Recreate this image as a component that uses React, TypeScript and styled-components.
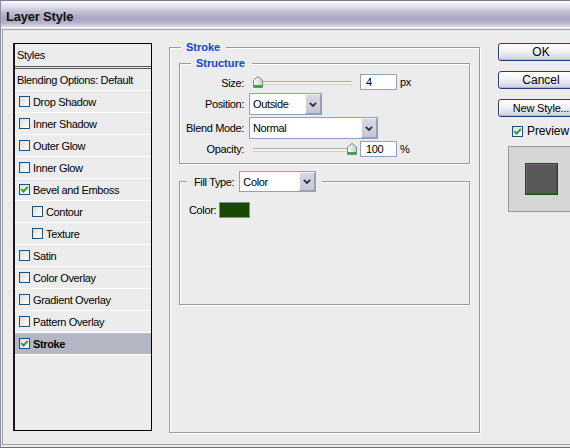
import React from 'react';
import styled, { createGlobalStyle } from 'styled-components';

const GlobalStyle = createGlobalStyle`
  html, body {
    margin: 0;
    padding: 0;
    overflow: hidden;
    background: #ececec;
  }
  body {
    font-family: 'Liberation Sans', Arial, sans-serif;
    font-size: 11px;
    letter-spacing: -0.35px;
    color: #000;
  }
`;

const Window = styled.div`
  width: 600px;
  height: 448px;
  box-sizing: border-box;
  display: flex;
  flex-direction: column;
  background: #ececec;
  border-left: 1px solid #8c8ca2;
  border-bottom: 1px solid #6e6e8a;
`;

const TitleBar = styled.div`
  flex: none;
  height: 28px;
  box-sizing: border-box;
  padding: 8px 0 0 5px;
  border-top: 1px solid #7a7a96;
  border-bottom: 1px solid #f6f6fa;
  background: linear-gradient(
    to bottom,
    #fdfdff 0%,
    #e4e4ee 18%,
    #bdbcd0 45%,
    #a7a6c0 66%,
    #b4b3ca 84%,
    #dcdce8 100%
  );
  font-size: 13px;
  font-weight: bold;
  letter-spacing: -0.2px;
  line-height: 15px;
  color: #111;
`;

const Frame = styled.div`
  margin: 1px 0 2px 1px;
  height: 416px;
  box-sizing: border-box;
  border: 1px solid #a0a0a8;
  display: flex;
  align-items: flex-start;
  padding: 13px 0 0 10px;
`;

/* ---------- left style list ---------- */

const StyleList = styled.div`
  flex: none;
  width: 139px;
  height: 388px;
  box-sizing: border-box;
  border: 1px solid #000;
  border-left: 2px solid #1a1a1a;
  background: #ececec;
`;

const ListHeader = styled.div`
  height: 22px;
  line-height: 22px;
  padding-left: 2px;
  border-bottom: 3px double #555;
`;

const ListItem = styled.div<{ $indent?: boolean; $selected?: boolean; $plain?: boolean }>`
  height: 21px;
  border-bottom: 1px solid #fff;
  display: flex;
  align-items: center;
  gap: 3px;
  padding-left: ${(p) => (p.$plain ? 2 : p.$indent ? 17 : 4)}px;
  background: ${(p) => (p.$selected ? '#b4b6c4' : 'transparent')};
  font-weight: ${(p) => (p.$selected ? 'bold' : 'normal')};
  white-space: nowrap;
`;

const Box = styled.span`
  flex: none;
  width: 11px;
  height: 11px;
  box-sizing: border-box;
  border: 1px solid #1c5180;
  background: linear-gradient(135deg, #dcdcd6 0%, #f2f2ef 60%, #ffffff 100%);
  display: inline-flex;
  align-items: center;
  justify-content: center;
`;

const Checkbox = ({ checked }: { checked?: boolean }) => (
  <Box>
    {checked && (
      <svg width="9" height="9" viewBox="0 0 9 9">
        <path d="M1.3 4.2 L3.5 6.6 L7.8 1.8" fill="none" stroke="#21a121" strokeWidth="1.9" />
      </svg>
    )}
  </Box>
);

/* ---------- group boxes ---------- */

const Group = styled.fieldset<{ $height?: number }>`
  margin: 0;
  padding: 0;
  min-inline-size: 0;
  box-sizing: border-box;
  border: 1px solid #9c9c9c;
  box-shadow: inset 1px 1px 0 #fff, 1px 1px 0 #fff;
  ${(p) => (p.$height ? `height: ${p.$height}px;` : '')}
`;

const StrokeGroup = styled(Group)`
  flex: none;
  width: 311px;
  margin: -3px 0 0 17px;
`;

const Legend = styled.legend<{ $offset: number; $padLeft: number; $padRight: number }>`
  margin-left: ${(p) => p.$offset}px;
  padding: 0 ${(p) => p.$padRight}px 0 ${(p) => p.$padLeft}px;
  background: #ececec;
  line-height: 14px;
  font-weight: bold;
  letter-spacing: 0;
  color: #0b46d6;
`;

const FillLegend = styled.legend`
  margin-left: 7px;
  padding: 0 6px 0 7px;
  background: #ececec;
  display: flex;
  align-items: center;
  gap: 5px;
`;

const GroupBody = styled.div`
  padding: 2px 9px 0 9px;
`;

const StructureRows = styled.div`
  display: grid;
  grid-template-columns: 64px auto;
  grid-template-rows: 16px 22px 22px 16px;
  column-gap: 5px;
  row-gap: 2px;
  align-items: center;
  padding: 5px 0 6px 0;
`;

const Label = styled.span`
  text-align: right;
  white-space: nowrap;
`;

const Controls = styled.div`
  display: flex;
  align-items: center;
  gap: 3px;
  height: 100%;
`;

const SizeControls = styled(Controls)`
  margin-bottom: 2px;
`;

/* ---------- form controls ---------- */

const SliderWrap = styled.div`
  position: relative;
  width: 108px;
  height: 16px;
`;

const SliderLine = styled.div`
  position: absolute;
  left: 4px;
  right: 5px;
  top: 7px;
  height: 3px;
  box-sizing: border-box;
  border-radius: 2px;
  border-top: 1px solid #b0b0aa;
  background: #f5f4ec;
  box-shadow: 0 1px 0 #d0d0c8;
`;

const Thumb = styled.svg`
  position: absolute;
  top: 2px;
`;

const Slider = ({ pct }: { pct: number }) => (
  <SliderWrap>
    <SliderLine />
    <Thumb width="10" height="12" viewBox="0 0 10 12" style={{ left: 3 + pct * 95 }}>
      <defs>
        <linearGradient id="thumbFill" x1="0" y1="0" x2="1" y2="0">
          <stop offset="0" stopColor="#ffffff" />
          <stop offset="1" stopColor="#c9cbc9" />
        </linearGradient>
      </defs>
      <path d="M0.5 4 L5 0.5 L9.5 4 V11.5 H0.5 Z" fill="url(#thumbFill)" stroke="#7d8a80" />
      <rect x="1" y="9" width="8" height="2.5" fill="#33a845" />
    </Thumb>
  </SliderWrap>
);

const NumberField = styled.div`
  width: 37px;
  height: 16px;
  box-sizing: border-box;
  border: 1px solid #8ea4bd;
  background: #fff;
  padding-left: 5px;
  line-height: 14px;
`;

const SelectBox = styled.div<{ $width: number; $height: number }>`
  width: ${(p) => p.$width}px;
  height: ${(p) => p.$height}px;
  box-sizing: border-box;
  border: 1px solid #8ea4bd;
  background: #fff;
  display: flex;
  align-items: stretch;
`;

const SelectValue = styled.span`
  flex: 1;
  padding-left: 3px;
  display: flex;
  align-items: center;
  white-space: nowrap;
`;

const DropButton = styled.span`
  flex: none;
  width: 16px;
  box-sizing: border-box;
  border: 1px solid;
  border-color: #f4f4fa #9c9cb4 #9c9cb4 #f4f4fa;
  background: linear-gradient(to bottom, #d8d8e4 0%, #c6c6d6 100%);
  display: flex;
  align-items: center;
  justify-content: center;
`;

const Select = ({ value, width, height = 22 }: { value: string; width: number; height?: number }) => (
  <SelectBox $width={width} $height={height}>
    <SelectValue>{value}</SelectValue>
    <DropButton>
      <svg width="8" height="5" viewBox="0 0 8 5">
        <path d="M0.8 0.8 L4 4 L7.2 0.8" fill="none" stroke="#333" strokeWidth="1.8" />
      </svg>
    </DropButton>
  </SelectBox>
);

const ColorRow = styled.div`
  display: flex;
  align-items: center;
  gap: 3px;
  padding: 10px 0 0 9px;
`;

const Swatch = styled.span<{ $color: string }>`
  width: 31px;
  height: 16px;
  box-sizing: border-box;
  border: 1px solid #8a8a8a;
  background: ${(p) => p.$color};
`;

const FillGroup = styled(Group)`
  margin-top: 7px;
`;

/* ---------- right column ---------- */

const Side = styled.div`
  flex: none;
  margin-left: 18px;
  display: flex;
  flex-direction: column;
  align-items: flex-start;
`;

const Button = styled.button<{ $compact?: boolean }>`
  width: 86px;
  height: 18px;
  box-sizing: border-box;
  margin: 0 0 10px 0;
  padding: 0;
  border: 1px solid #213f79;
  border-radius: 3px;
  background: linear-gradient(to bottom, #ffffff 0%, #f6f6fa 35%, #e2e2ec 75%, #c9c9dc 100%);
  box-shadow: inset -1px -1px 0 #b4b4cc, inset 1px 1px 0 #ffffff;
  font-family: 'Liberation Sans', Arial, sans-serif;
  font-size: ${(p) => (p.$compact ? 11 : 12)}px;
  letter-spacing: ${(p) => (p.$compact ? -0.2 : 0)}px;
  line-height: 16px;
  color: #000;
  white-space: nowrap;
`;

const PreviewRow = styled.div`
  height: 11px;
  margin: -1px 0 0 14px;
  display: flex;
  align-items: center;
  gap: 4px;
  line-height: 11px;
  font-size: 12px;
  letter-spacing: -0.1px;
`;

const PreviewBox = styled.div`
  width: 66px;
  height: 66px;
  box-sizing: border-box;
  margin: 9px 0 0 10px;
  border: 1px solid #9a9a9a;
  background: #d6d6d6;
  display: flex;
  align-items: center;
  justify-content: center;
`;

const PreviewSquare = styled.div`
  width: 33px;
  height: 32px;
  box-sizing: border-box;
  border: 1px solid #1f4b14;
  background: #595959;
  box-shadow: inset 1px 1px 0 #6c6c6c, inset -1px -1px 0 #4a4a4a;
`;

const styleItems = [
  { label: 'Drop Shadow' },
  { label: 'Inner Shadow' },
  { label: 'Outer Glow' },
  { label: 'Inner Glow' },
  { label: 'Bevel and Emboss', checked: true },
  { label: 'Contour', indent: true },
  { label: 'Texture', indent: true },
  { label: 'Satin' },
  { label: 'Color Overlay' },
  { label: 'Gradient Overlay' },
  { label: 'Pattern Overlay' },
  { label: 'Stroke', checked: true, selected: true },
];

const App = () => {
  return (
    <>
      <GlobalStyle />
      <Window>
        <TitleBar>Layer Style</TitleBar>
        <Frame>
          <StyleList>
            <ListHeader>Styles</ListHeader>
            <ListItem $plain>Blending Options: Default</ListItem>
            {styleItems.map((item) => (
              <ListItem key={item.label} $indent={item.indent} $selected={item.selected}>
                <Checkbox checked={item.checked} />
                {item.label}
              </ListItem>
            ))}
          </StyleList>

          <StrokeGroup $height={393}>
            <Legend $offset={11} $padLeft={5} $padRight={6}>Stroke</Legend>
            <GroupBody>
              <Group>
                <Legend $offset={11} $padLeft={5} $padRight={7}>Structure</Legend>
                <StructureRows>
                  <Label>Size:</Label>
                  <SizeControls>
                    <Slider pct={3 / 249} />
                    <NumberField>4</NumberField>
                    <span>px</span>
                  </SizeControls>
                  <Label>Position:</Label>
                  <Controls>
                    <Select value="Outside" width={73} />
                  </Controls>
                  <Label>Blend Mode:</Label>
                  <Controls>
                    <Select value="Normal" width={129} />
                  </Controls>
                  <Label>Opacity:</Label>
                  <Controls>
                    <Slider pct={1} />
                    <NumberField>100</NumberField>
                    <span>%</span>
                  </Controls>
                </StructureRows>
              </Group>

              <FillGroup $height={134}>
                <FillLegend>
                  <span>Fill Type:</span>
                  <Select value="Color" width={77} height={21} />
                </FillLegend>
                <ColorRow>
                  <span>Color:</span>
                  <Swatch $color="#174a00" />
                </ColorRow>
              </FillGroup>
            </GroupBody>
          </StrokeGroup>

          <Side>
            <Button>OK</Button>
            <Button>Cancel</Button>
            <Button $compact>New Style...</Button>
            <PreviewRow>
              <Checkbox checked />
              Preview
            </PreviewRow>
            <PreviewBox>
              <PreviewSquare />
            </PreviewBox>
          </Side>
        </Frame>
      </Window>
    </>
  );
};

export default App;
